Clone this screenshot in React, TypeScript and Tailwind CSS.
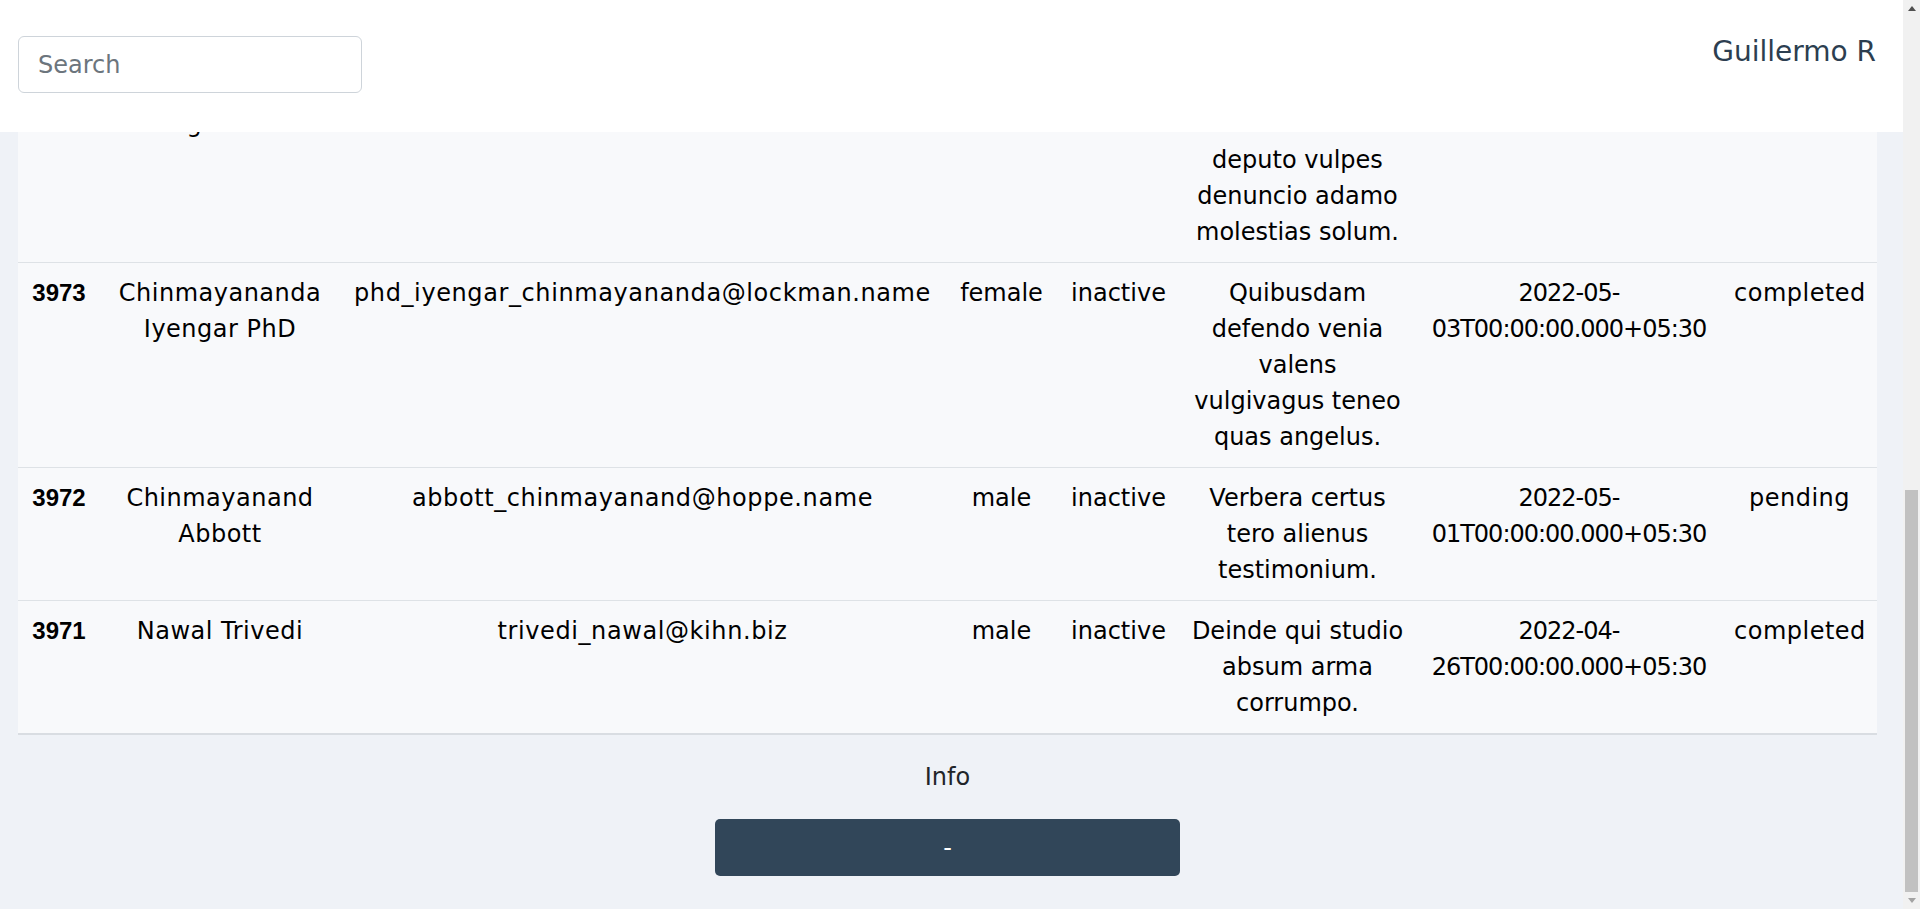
import React, { useLayoutEffect, useRef } from 'react';

type Todo = {
  id: number;
  name: string;
  email: string;
  gender: string;
  status: string;
  title: string;
  dueOn: string;
  state: string;
};

const todos: Todo[] = [
  {
    id: 3974,
    name: 'Chandrakanta Chattopadhyay Agarwal',
    email: 'agarwal_chandrakanta@stokes.com',
    gender: 'female',
    status: 'active',
    title: 'Tamen thesis contabesco tutamen cilicium deputo vulpes denuncio adamo molestias solum.',
    dueOn: '2022-05-05T00:00:00.000+05:30',
    state: 'pending',
  },
  {
    id: 3973,
    name: 'Chinmayananda Iyengar PhD',
    email: 'phd_iyengar_chinmayananda@lockman.name',
    gender: 'female',
    status: 'inactive',
    title: 'Quibusdam defendo venia valens vulgivagus teneo quas angelus.',
    dueOn: '2022-05-03T00:00:00.000+05:30',
    state: 'completed',
  },
  {
    id: 3972,
    name: 'Chinmayanand Abbott',
    email: 'abbott_chinmayanand@hoppe.name',
    gender: 'male',
    status: 'inactive',
    title: 'Verbera certus tero alienus testimonium.',
    dueOn: '2022-05-01T00:00:00.000+05:30',
    state: 'pending',
  },
  {
    id: 3971,
    name: 'Nawal Trivedi',
    email: 'trivedi_nawal@kihn.biz',
    gender: 'male',
    status: 'inactive',
    title: 'Deinde qui studio absum arma corrumpo.',
    dueOn: '2022-04-26T00:00:00.000+05:30',
    state: 'completed',
  },
];

const ScrollArrow: React.FC<{ down?: boolean }> = ({ down }) => (
  <div className="flex h-[17px] items-center justify-center">
    <svg width="8" height="5" viewBox="0 0 8 5">
      {down ? (
        <path d="M0 0H8L4 5Z" fill="#a3a3a3" />
      ) : (
        <path d="M4 0L8 5H0Z" fill="#505050" />
      )}
    </svg>
  </div>
);

const App: React.FC = () => {
  const scrollRef = useRef<HTMLDivElement>(null);

  useLayoutEffect(() => {
    const el = scrollRef.current;
    if (!el) return;
    const toBottom = () => {
      el.scrollTop = el.scrollHeight;
    };
    toBottom();
    document.fonts?.ready.then(toBottom);
    const t = window.setTimeout(toBottom, 60);
    return () => window.clearTimeout(t);
  }, []);

  return (
    <div className="flex h-screen bg-[#eff2f7] font-['DejaVu_Sans',sans-serif] text-[24px] leading-[36px]">
      <div ref={scrollRef} className="h-full min-w-0 flex-1 overflow-y-scroll [scrollbar-width:none]">
        <header className="sticky top-0 z-10 flex h-[132px] items-start justify-between bg-white pl-[18px] pr-[27px]">
          <input
            type="text"
            placeholder="Search"
            className="mt-[36px] h-[57px] w-[344px] rounded-md border border-[#ced4da] bg-white px-[19px] text-[24px] text-[#212529] outline-none placeholder:text-[#6c757d]"
          />
          <span className="mt-[31px] text-[28px] leading-[42px] text-[#2c3e50]">Guillermo R</span>
        </header>

        <main className="pl-[18px] pr-[26px]">
          <table className="w-full table-fixed border-collapse bg-[#f8f9fb] text-center text-black">
            <colgroup>
              <col className="w-[82px]" />
              <col className="w-[240px]" />
              <col className="w-[605px]" />
              <col className="w-[113px]" />
              <col className="w-[121px]" />
              <col className="w-[237px]" />
              <col className="w-[306px]" />
              <col />
            </colgroup>
            <tbody>
              {todos.map((todo) => (
                <tr
                  key={todo.id}
                  className="border-b border-[#dee2e6] last:border-b-2 last:border-[#d9dde2]"
                >
                  <th className="px-3 py-3 align-top font-['Liberation_Sans',Arial,sans-serif] font-bold">
                    {todo.id}
                  </th>
                  <td className="px-3 py-3 align-top tracking-[0.5px]">{todo.name}</td>
                  <td className="px-3 py-3 align-top tracking-[0.6px]">{todo.email}</td>
                  <td className="px-3 py-3 align-top">{todo.gender}</td>
                  <td className="px-3 py-3 align-top">{todo.status}</td>
                  <td className="px-3 py-3 align-top">{todo.title}</td>
                  <td className="px-2 py-3 align-top tracking-[-1px]">{todo.dueOn}</td>
                  <td className="px-3 py-3 align-top tracking-[0.5px]">{todo.state}</td>
                </tr>
              ))}
            </tbody>
          </table>
        </main>

        <footer className="flex flex-col items-center pl-[18px] pr-[26px] pt-6 pb-[33px]">
          <p className="text-[#212529]">Info</p>
          <button
            type="button"
            className="mt-6 h-[57px] w-[465px] rounded-[5px] bg-[#314659] text-white"
          >
            -
          </button>
        </footer>
      </div>

      {/* window scrollbar, scrolled to the end */}
      <div className="flex h-full w-[17px] shrink-0 flex-col bg-[#f1f1f1]">
        <ScrollArrow />
        <div className="flex flex-1 flex-col justify-end px-[2px]">
          <div className="h-[402px] bg-[#c1c1c1]" />
        </div>
        <ScrollArrow down />
      </div>
    </div>
  );
};

export default App;
